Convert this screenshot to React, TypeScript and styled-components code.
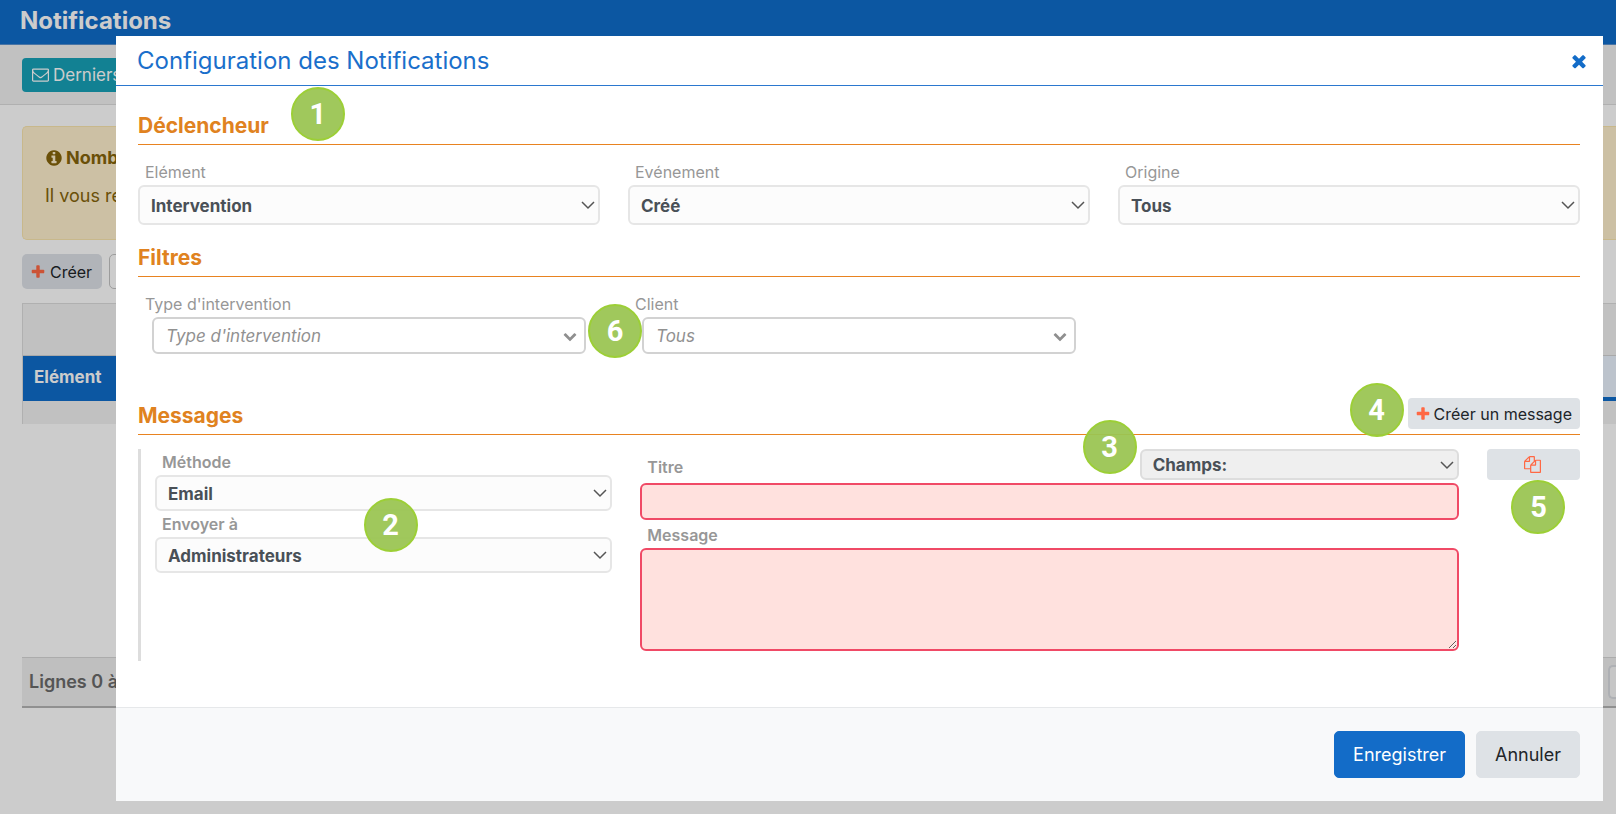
import React, { useId } from "react";
import styled, { createGlobalStyle } from "styled-components";

const GlobalStyle = createGlobalStyle`
  *, *::before, *::after { box-sizing: border-box; }
  body {
    margin: 0;
    background: #ffffff;
    color: #212529;
    font-family: Inter, "Liberation Sans", sans-serif;
    font-size: 17px;
    line-height: 24px;
    overflow: hidden;
  }
  button, input, select, textarea { font: inherit; }
`;

/* ---------- Icons ---------- */

const Glyph = styled.svg<{ $size: number }>`
  display: block;
  flex: none;
  width: ${(p) => p.$size}px;
  height: ${(p) => p.$size}px;
  fill: currentColor;
`;

const paths = {
  times:
    "M1490 1322q0 40-28 68l-136 136q-28 28-68 28t-68-28l-294-294-294 294q-28 28-68 28t-68-28l-136-136q-28-28-28-68t28-68l294-294-294-294q-28-28-28-68t28-68l136-136q28-28 68-28t68 28l294 294 294-294q28-28 68-28t68 28l136 136q28 28 28 68t-28 68l-294 294 294 294q28 28 28 68z",
  plus: "M1600 736v192q0 40-28 68t-68 28h-416v416q0 40-28 68t-68 28h-192q-40 0-68-28t-28-68v-416h-416q-40 0-68-28t-28-68v-192q0-40 28-68t68-28h416v-416q0-40 28-68t68-28h192q40 0 68 28t28 68v416h416q40 0 68 28t28 68z",
  copy: "M1696 384q40 0 68 28t28 68v1216q0 40-28 68t-68 28h-960q-40 0-68-28t-28-68v-288h-544q-40 0-68-28t-28-68v-672q0-40 20-88t48-76l408-408q28-28 76-48t88-20h416q40 0 68 28t28 68v328q68-40 128-40h416zm-544 213l-299 299h299v-299zm-640-384l-299 299h299v-299zm196 647l316-316v-416h-384v416q0 40-28 68t-68 28h-416v640h512v-256q0-40 20-88t48-76zm956 804v-1152h-384v416q0 40-28 68t-68 28h-416v640h896z",
  info: "M1152 1376v-160q0-14-9-23t-23-9h-96v-512q0-14-9-23t-23-9h-320q-14 0-23 9t-9 23v160q0 14 9 23t23 9h96v320h-96q-14 0-23 9t-9 23v160q0 14 9 23t23 9h448q14 0 23-9t9-23zm-128-896v-160q0-14-9-23t-23-9h-192q-14 0-23 9t-9 23v160q0 14 9 23t23 9h192q14 0 23-9t9-23zm640 416q0 209-103 385.5t-279.5 279.5-385.5 103-385.5-103-279.5-279.5-103-385.5 103-385.5 279.5-279.5 385.5-103 385.5 103 279.5 279.5 103 385.5z",
  envelope:
    "M1664 1504v-768q-32 36-69 66-268 206-426 338-51 43-83 67t-86.5 48.5-102.5 24.5h-2q-48 0-102.5-24.5t-86.5-48.5-83-67q-158-132-426-338-37-30-69-66v768q0 13 9.5 22.5t22.5 9.5h1472q13 0 22.5-9.5t9.5-22.5zm0-1051v-24.5l-.5-13-3-12.5-5.5-9-9-7.5-14-2.5h-1472q-13 0-22.5 9.5t-9.5 22.5q0 168 147 284 193 152 401 317 6 5 35 29.5t46 37.5 44.5 31.5 50.5 27.5 43 9h2q20 0 43-9t50.5-27.5 44.5-31.5 46-37.5 35-29.5q208-165 401-317 54-43 100.5-115.5t46.5-131.5zm128-37v1088q0 66-47 113t-113 47h-1472q-66 0-113-47t-47-113v-1088q0-66 47-113t113-47h1472q66 0 113 47t47 113z",
  chevron:
    "M1683 808l-742 741q-19 19-45 19t-45-19l-742-741q-19-19-19-45.5t19-45.5l166-165q19-19 45-19t45 19l531 531 531-531q19-19 45-19t45 19l166 165q19 19 19 45.5t-19 45.5z",
};

const Icon = ({ name, size }: { name: keyof typeof paths; size: number }) => (
  <Glyph viewBox="0 0 1792 1792" $size={size} aria-hidden="true">
    <path d={paths[name]} />
  </Glyph>
);

/* ---------- Page behind the dialog ---------- */

const Page = styled.div`
  display: flex;
  flex-direction: column;
  min-height: 100vh;
`;

const TopBar = styled.header`
  height: 45px;
  padding: 0 20px;
  background: #0f6dcb;
  border-bottom: 1px solid #5a92cf;
`;

const PageTitle = styled.h1`
  margin: 0;
  color: #ffffff;
  font-size: 24px;
  line-height: 41px;
  font-weight: 700;
`;

const Toolbar = styled.div`
  display: flex;
  align-items: center;
  height: 60px;
  padding: 0 22px;
  background: #f2f2f2;
  border-bottom: 1px solid #dcdcdc;
`;

const TealButton = styled.button`
  display: flex;
  align-items: center;
  gap: 4px;
  height: 34px;
  padding: 0 10px;
  border: 0;
  border-radius: 4px;
  background: #17a2b8;
  color: #ffffff;
`;

const Content = styled.main`
  padding: 21px 0 0 22px;
`;

const Notice = styled.section`
  height: 114px;
  padding: 19px 22px;
  border: 1px solid #fbe6ae;
  border-right: 0;
  border-radius: 5px 0 0 5px;
  background: #fff0cd;
  color: #85640a;
`;

const NoticeTitle = styled.h2`
  display: flex;
  align-items: center;
  gap: 3px;
  margin: 0 0 14px;
  font-size: 18px;
  line-height: 24px;
`;

const NoticeText = styled.p`
  margin: 0;
  font-size: 18px;
  line-height: 24px;
`;

const Actions = styled.div`
  display: flex;
  gap: 7px;
  margin: 14px 0;
`;

const CreateButton = styled.button`
  display: flex;
  align-items: center;
  gap: 4px;
  height: 35px;
  padding: 0 10px 0 8px;
  border: 0;
  border-radius: 5px;
  background: #dee2e8;
  color: #212529;
  font-size: 16px;
`;

const SearchInput = styled.input`
  width: 200px;
  height: 35px;
  border: 1px solid #c4c4c4;
  border-radius: 5px;
  background: #ffffff;
`;

const Grid = styled.table`
  width: 100%;
  border-spacing: 0;
  border-left: 1px solid #dcdcdc;
`;

const FilterCell = styled.td`
  height: 53px;
  padding: 0;
  background: #f2f2f2;
  border-top: 1px solid #dcdcdc;
  border-bottom: 1px solid #d4d4d4;
`;

const ColumnHead = styled.th<{ $active?: boolean }>`
  height: 45px;
  padding: 0 11px;
  background: ${(p) => (p.$active ? "#0f6dcb" : "#ebf4ff")};
  border-bottom: 4px solid #0f6dcb;
  color: #ffffff;
  font-size: 17px;
  text-align: left;
`;

const EmptyRow = styled.td`
  height: 23px;
  padding: 0;
  background: #f2f2f2;
`;

const Pager = styled.footer`
  display: flex;
  align-items: center;
  justify-content: space-between;
  height: 51px;
  margin-top: 233px;
  padding-left: 7px;
  background: #efefef;
  border-top: 1px solid #d8d8d8;
  border-bottom: 2px solid #b4b4b4;
  color: #6b6b6b;
  font-size: 18px;
  font-weight: 600;
`;

const PagerButton = styled.button`
  width: 8px;
  height: 34px;
  padding: 0;
  border: 2px solid #dadde2;
  border-right: 0;
  border-radius: 5px 0 0 5px;
  background: #f8f8f8;
`;

/* ---------- Dialog ---------- */

const Backdrop = styled.div`
  position: fixed;
  inset: 0;
  padding: 36px 13px 13px 116px;
  background: rgba(0, 0, 0, 0.2);
`;

const Dialog = styled.form`
  display: flex;
  flex-direction: column;
  background: #ffffff;
`;

const DialogHeader = styled.div`
  display: flex;
  align-items: center;
  justify-content: space-between;
  height: 50px;
  padding: 0 14px 0 21px;
  border-bottom: 1px solid #2b78cf;
`;

const DialogTitle = styled.h2`
  margin: 0;
  color: #1a6fcb;
  font-size: 24px;
  line-height: 30px;
  font-weight: 400;
`;

const CloseButton = styled.button`
  padding: 0;
  border: 0;
  background: none;
  color: #136cc8;
`;

const DialogBody = styled.div`
  padding: 26px 23px 46px 22px;
`;

const SectionHead = styled.div<{ $space?: number }>`
  display: flex;
  align-items: flex-end;
  justify-content: space-between;
  margin-top: ${(p) => p.$space ?? 0}px;
  border-bottom: 1px solid #e88320;
`;

const TitleWrap = styled.div`
  position: relative;
`;

const SectionTitle = styled.h3`
  margin: 0;
  padding-bottom: 4px;
  color: #e08220;
  font-size: 21px;
  line-height: 28px;
  font-weight: 700;
`;

const FieldRow = styled.div`
  display: grid;
  grid-template-columns: repeat(3, 1fr);
  gap: 28px;
  margin-top: 18px;
`;

const Field = styled.div`
  position: relative;
  display: flex;
  flex-direction: column;
`;

const Label = styled.label`
  padding: 0 7px 4px;
  color: #979797;
  font-size: 16px;
  line-height: 18px;
`;

const StrongLabel = styled.label`
  padding: 3px 7px;
  color: #979797;
  font-size: 16px;
  line-height: 20px;
  font-weight: 600;
`;

const MessageLabel = styled(StrongLabel)`
  padding: 5px 7px 3px;
`;

const SelectBox = styled.div<{ $width?: string }>`
  position: relative;
  width: ${(p) => p.$width ?? "100%"};
`;

const Select = styled.select<{ $height: number; $muted?: boolean }>`
  display: block;
  width: 100%;
  height: ${(p) => p.$height}px;
  padding: 1px 30px 0 11px;
  appearance: none;
  border: 2px solid ${(p) => (p.$muted ? "#dddddd" : "#e6e6e6")};
  border-radius: 6px;
  background: ${(p) => (p.$muted ? "#efefef" : "#fcfcfc")};
  color: #495057;
  font-size: 17px;
  font-weight: 700;
`;

const Caret = styled.svg`
  position: absolute;
  top: calc(50% - 4px);
  right: 5px;
  width: 14px;
  height: 9px;
  fill: none;
  stroke: #555555;
  stroke-width: 1.5;
  pointer-events: none;
`;

const ComboBox = styled.div`
  display: flex;
  align-items: center;
  height: 37px;
  margin: 0 14px;
  padding: 1px 7px 0 12px;
  border: 2px solid #d2d2d2;
  border-radius: 6px;
  color: #8f8f8f;
`;

const ComboInput = styled.input`
  flex: 1;
  min-width: 0;
  padding: 0;
  border: 0;
  outline: 0;
  background: none;
  font-size: 17px;
  font-style: italic;
  &::placeholder { color: #919191; opacity: 1; }
`;

const SmallButton = styled.button`
  position: relative;
  display: flex;
  align-items: center;
  justify-content: center;
  gap: 3px;
  height: 31px;
  padding: 0 8px 0 7px;
  border: 0;
  border-radius: 4px;
  background: #dee2e6;
  color: #212529;
  font-size: 16px;
`;

const AddButton = styled(SmallButton)`
  margin-bottom: 5px;
`;

const Accent = styled.span`
  color: #ff6844;
`;

const MessageBlock = styled.div`
  display: grid;
  grid-template-columns: 457fr 818fr 93fr;
  gap: 28px;
  align-items: start;
  margin-top: 14px;
  padding: 0 0 10px 14px;
  border-left: 3px solid #dddddd;
`;

const TitleLine = styled.div`
  display: flex;
  align-items: flex-end;
  justify-content: space-between;
  margin-bottom: 3px;
`;

const TitleInput = styled.input`
  height: 37px;
  padding: 0 11px;
  border: 2px solid #f04a66;
  border-radius: 6px;
  background: #ffe1de;
`;

const MessageInput = styled.textarea`
  height: 103px;
  padding: 6px 11px;
  border: 2px solid #f04a66;
  border-radius: 6px;
  background: #ffe1de;
  resize: vertical;
`;

const DialogFooter = styled.div`
  display: flex;
  justify-content: flex-end;
  gap: 11px;
  padding: 23px 23px 23px 22px;
  border-top: 1px solid #e6e8ea;
  background: #f8f9fa;
`;

const FooterButton = styled.button<{ $primary?: boolean }>`
  height: 47px;
  padding: 0 18px;
  border: 1px solid ${(p) => (p.$primary ? "#136cc8" : "#dee2e6")};
  border-radius: 5px;
  background: ${(p) => (p.$primary ? "#136cc8" : "#dee2e6")};
  color: ${(p) => (p.$primary ? "#ffffff" : "#212529")};
  font-size: 18px;
`;

/* ---------- Numbered help markers ---------- */

const Marker = styled.span<{ $left: string; $top: string }>`
  position: absolute;
  z-index: 1;
  left: ${(p) => p.$left};
  top: ${(p) => p.$top};
  display: flex;
  align-items: center;
  justify-content: center;
  width: 54px;
  height: 54px;
  border: 2px solid #9ccf36;
  border-radius: 50%;
  background: rgba(154, 197, 82, 0.94);
  color: #ffffff;
  font-family: Roboto, "Liberation Sans", sans-serif;
  font-size: 29px;
  line-height: 32px;
  font-weight: 700;
`;

type PickerProps = {
  id?: string;
  label?: string;
  value: string;
  height: number;
  muted?: boolean;
  width?: string;
};

const Picker = ({ id, label, value, height, muted, width }: PickerProps) => (
  <SelectBox $width={width}>
    <Select id={id} aria-label={label} $height={height} $muted={muted}>
      <option>{value}</option>
    </Select>
    <Caret viewBox="0 0 14 9" aria-hidden="true">
      <path d="M1 1l6 6 6-6" />
    </Caret>
  </SelectBox>
);

const SelectField = ({ label, value }: { label: string; value: string }) => {
  const id = useId();
  return (
    <Field>
      <Label htmlFor={id}>{label}</Label>
      <Picker id={id} value={value} height={40} />
    </Field>
  );
};

const ComboField = ({
  label,
  hint,
  children,
}: {
  label: string;
  hint: string;
  children?: React.ReactNode;
}) => {
  const id = useId();
  return (
    <Field>
      <Label htmlFor={id}>{label}</Label>
      <ComboBox>
        <ComboInput id={id} role="combobox" aria-expanded={false} placeholder={hint} />
        <Icon name="chevron" size={14} />
      </ComboBox>
      {children}
    </Field>
  );
};

export default function App() {
  return (
    <>
      <GlobalStyle />
      <Page>
        <TopBar>
          <PageTitle>Notifications</PageTitle>
        </TopBar>
        <Toolbar>
          <TealButton type="button">
            <Icon name="envelope" size={17} />
            Derniers
          </TealButton>
        </Toolbar>
        <Content>
          <Notice>
            <NoticeTitle>
              <Icon name="info" size={18} />
              Nomb
            </NoticeTitle>
            <NoticeText>Il vous re</NoticeText>
          </Notice>
          <Actions>
            <CreateButton type="button">
              <Accent>
                <Icon name="plus" size={16} />
              </Accent>
              Créer
            </CreateButton>
            <SearchInput type="search" aria-label="Rechercher" />
          </Actions>
          <Grid>
            <thead>
              <tr>
                <FilterCell colSpan={2} />
              </tr>
              <tr>
                <ColumnHead $active>Elément</ColumnHead>
                <ColumnHead />
              </tr>
            </thead>
            <tbody>
              <tr>
                <EmptyRow colSpan={2} />
              </tr>
            </tbody>
          </Grid>
          <Pager>
            Lignes 0 à
            <PagerButton type="button" aria-label="Page" />
          </Pager>
        </Content>
      </Page>

      <Backdrop>
        <Dialog role="dialog" aria-labelledby="dialog-title">
          <DialogHeader>
            <DialogTitle id="dialog-title">Configuration des Notifications</DialogTitle>
            <CloseButton type="button" aria-label="Fermer">
              <Icon name="times" size={20} />
            </CloseButton>
          </DialogHeader>

          <DialogBody>
            <SectionHead>
              <TitleWrap>
                <SectionTitle>Déclencheur</SectionTitle>
                <Marker $left="calc(100% + 22px)" $top="-25px">1</Marker>
              </TitleWrap>
            </SectionHead>
            <FieldRow>
              <SelectField label="Elément" value="Intervention" />
              <SelectField label="Evénement" value="Créé" />
              <SelectField label="Origine" value="Tous" />
            </FieldRow>

            <SectionHead $space={19}>
              <SectionTitle>Filtres</SectionTitle>
            </SectionHead>
            <FieldRow>
              <ComboField label="Type d'intervention" hint="Type d'intervention">
                <Marker $left="calc(100% - 12px)" $top="9px">6</Marker>
              </ComboField>
              <ComboField label="Client" hint="Tous" />
            </FieldRow>

            <SectionHead $space={44}>
              <SectionTitle>Messages</SectionTitle>
              <AddButton type="button">
                <Accent>
                  <Icon name="plus" size={16} />
                </Accent>
                Créer un message
                <Marker $left="-58px" $top="-15px">4</Marker>
              </AddButton>
            </SectionHead>
            <MessageBlock>
              <Field>
                <StrongLabel htmlFor="method">Méthode</StrongLabel>
                <Picker id="method" value="Email" height={36} />
                <StrongLabel htmlFor="recipient">Envoyer à</StrongLabel>
                <Picker id="recipient" value="Administrateurs" height={36} />
                <Marker $left="calc(50% - 20px)" $top="49px">2</Marker>
              </Field>
              <Field>
                <TitleLine>
                  <StrongLabel htmlFor="subject">Titre</StrongLabel>
                  <Picker label="Champs" value="Champs:" height={31} width="39%" muted />
                </TitleLine>
                <TitleInput id="subject" type="text" />
                <MessageLabel htmlFor="message">Message</MessageLabel>
                <MessageInput id="message" />
                <Marker $left="calc(61% - 57px)" $top="-29px">3</Marker>
              </Field>
              <SmallButton type="button" aria-label="Dupliquer">
                <Accent>
                  <Icon name="copy" size={17} />
                </Accent>
                <Marker $left="calc(50% - 22px)" $top="31px">5</Marker>
              </SmallButton>
            </MessageBlock>
          </DialogBody>

          <DialogFooter>
            <FooterButton type="submit" $primary>
              Enregistrer
            </FooterButton>
            <FooterButton type="button">Annuler</FooterButton>
          </DialogFooter>
        </Dialog>
      </Backdrop>
    </>
  );
}
